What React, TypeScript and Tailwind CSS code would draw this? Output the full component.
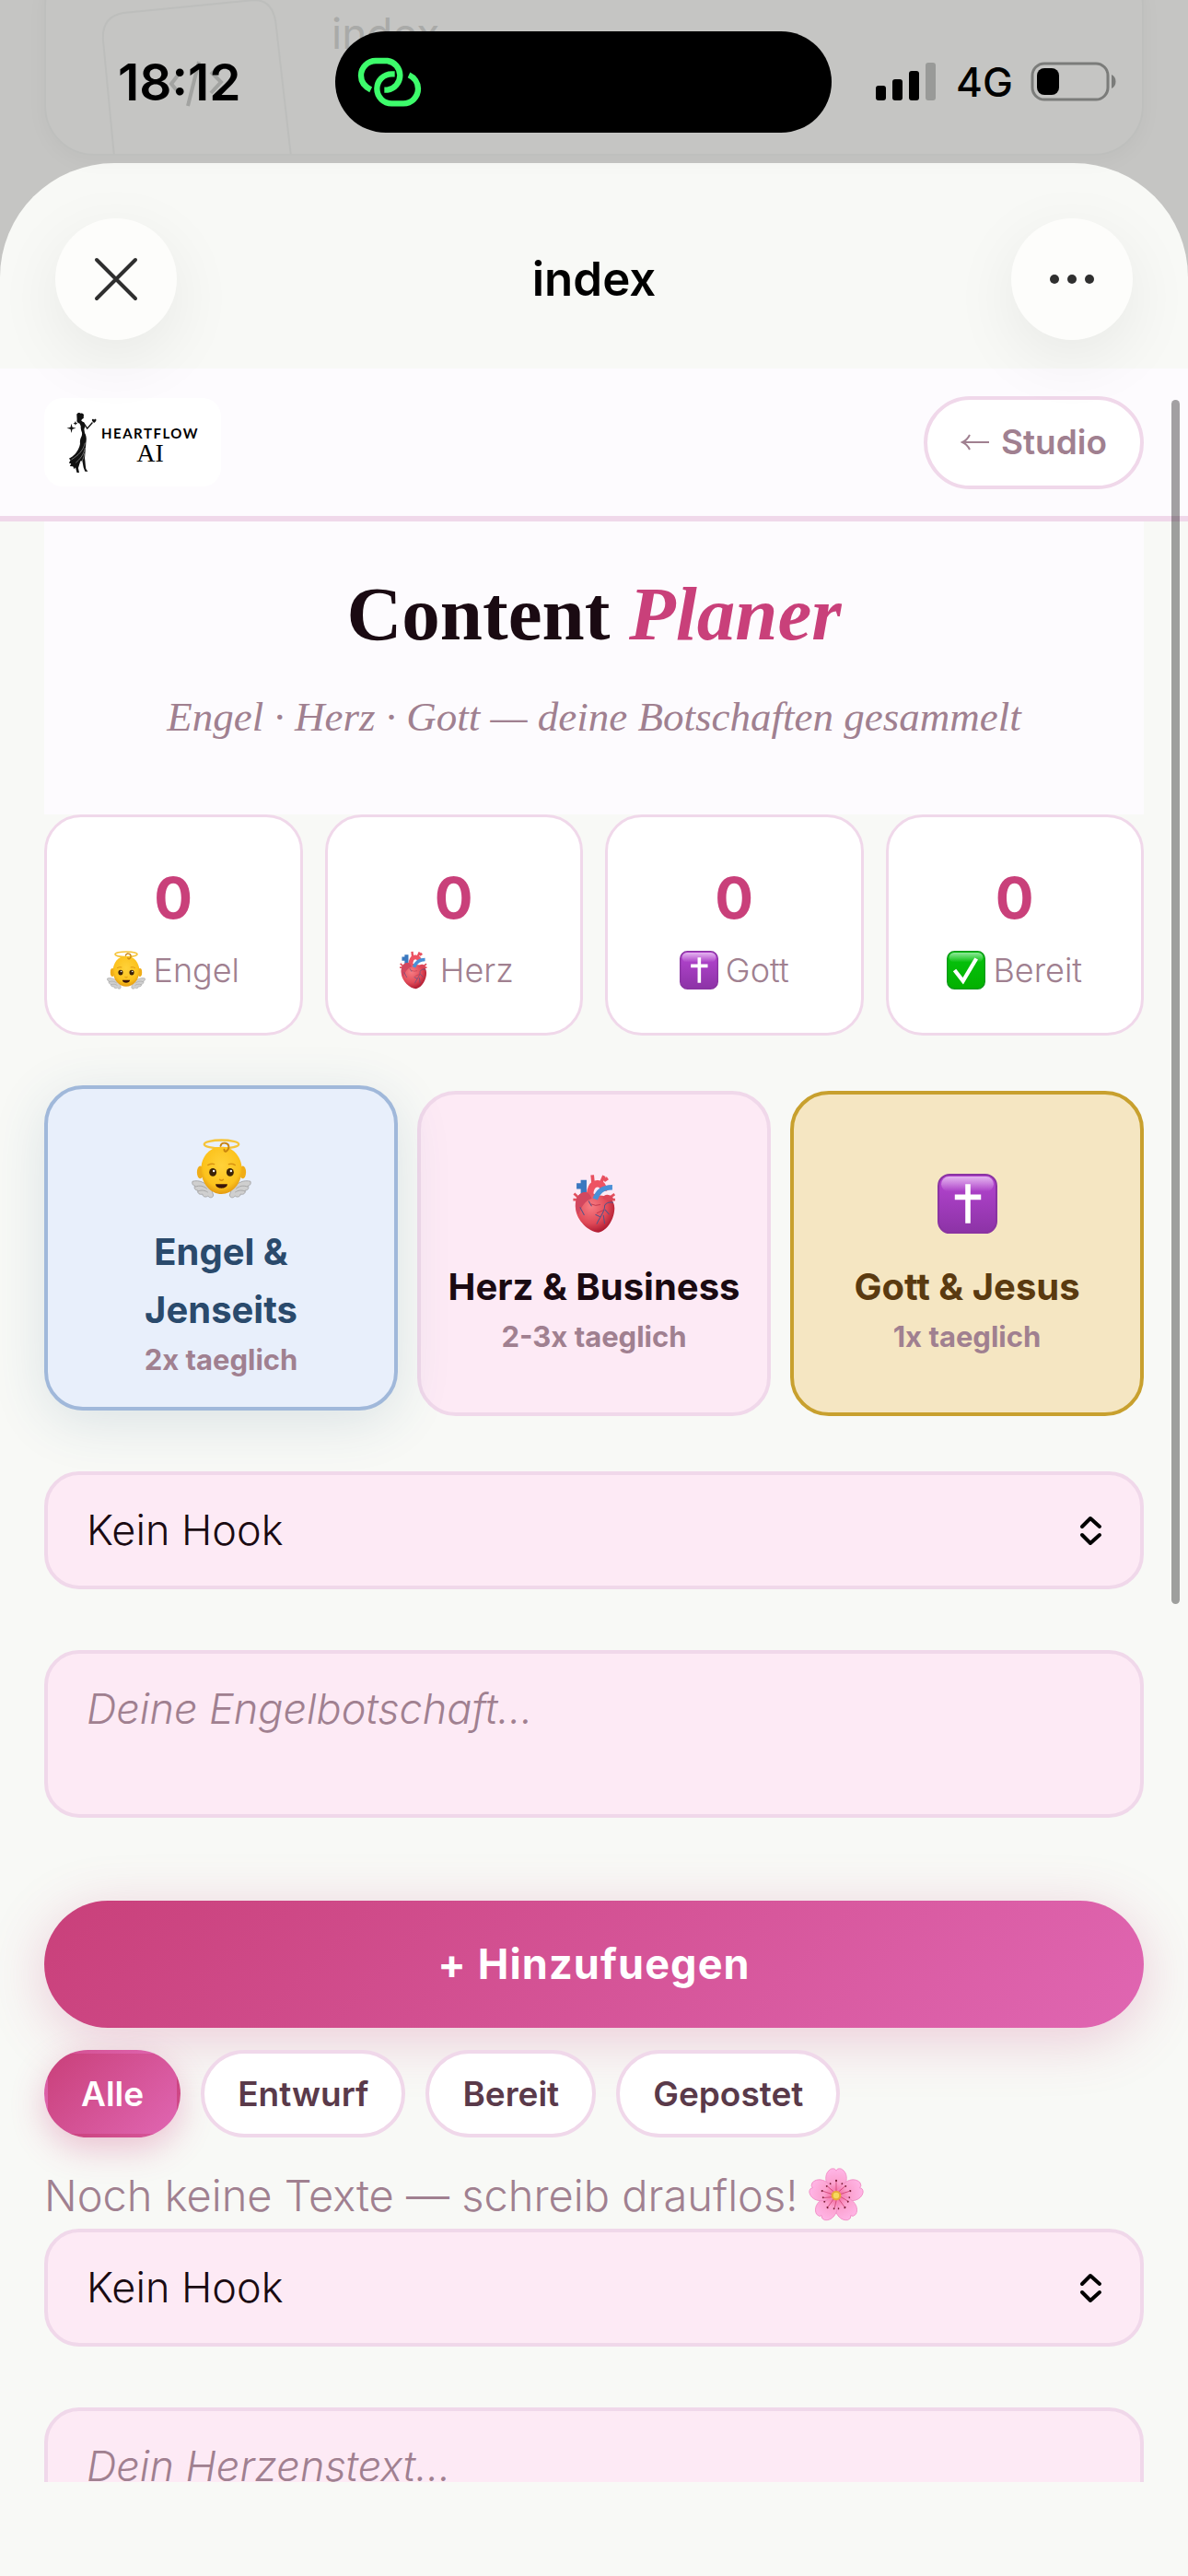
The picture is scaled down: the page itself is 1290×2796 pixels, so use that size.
import { useId, useState } from 'react';
import type { ReactNode } from 'react';

/* ---------- Emoji drawings ---------- */

const AngelIcon = ({ className }: { className: string }) => {
  const id = useId();
  return (
    <svg className={className} viewBox="0 2 66 66" preserveAspectRatio="none" aria-hidden="true">
      <defs>
        <radialGradient id={id} cx="50%" cy="40%" r="60%">
          <stop offset="0%" stopColor="#ffd23a" />
          <stop offset="75%" stopColor="#fcc21c" />
          <stop offset="100%" stopColor="#e39a12" />
        </radialGradient>
      </defs>
      {/* Wings */}
      <g fill="#cfcfcf" stroke="#9d9d9d" strokeWidth="0.8">
        <path d="M22 58C16 50 8 47 1 49c-1 3 1 5 3 5-2 2 0 5 3 5-1 3 2 5 5 4 0 3 4 4 6 2 2 3 6 2 6-1Z" />
        <path d="M44 58c6-8 14-11 21-9 1 3-1 5-3 5 2 2 0 5-3 5 1 3-2 5-5 4 0 3-4 4-6 2-2 3-6 2-6-1Z" />
        <path d="M4 55c5-2 9-1 13 2M7 60c4-2 8-1 11 1M62 55c-5-2-9-1-13 2M59 60c-4-2-8-1-11 1" fill="none" />
      </g>
      {/* Halo */}
      <ellipse cx="33" cy="8" rx="19" ry="4.5" fill="none" stroke="#f6c437" strokeWidth="2.4" />
      {/* Head */}
      <ellipse cx="9.5" cy="39" rx="3.5" ry="7" fill="#f0ad18" />
      <ellipse cx="56.5" cy="39" rx="3.5" ry="7" fill="#f0ad18" />
      <path d="M33 11C19 11 10.5 23 10.5 36 10.5 51 21 63 33 63s22.5-12 22.500-27C55.500 23 47 11 33 11Z" fill={`url(#${id})`} />
      <path d="M32 10c1-5 9-4 9 1 0 4-5 7-5 3" fill="none" stroke="#c9850e" strokeWidth="2" strokeLinecap="round" />
      <ellipse cx="23.5" cy="39" rx="4" ry="4.5" fill="#3b2207" />
      <ellipse cx="42.5" cy="39" rx="4" ry="4.5" fill="#3b2207" />
      <circle cx="24.5" cy="37.5" r="1.2" fill="#fff" />
      <circle cx="43.5" cy="37.5" r="1.2" fill="#fff" />
      <path d="M18 31q4-2 7-1M41 30q4-1 7 1M31 47q2 2 4 0" fill="none" stroke="#d9920f" strokeWidth="1.4" strokeLinecap="round" />
      <path d="M26.500 52h13c0 6-13 6-13 0Z" fill="#3a1509" />
    </svg>
  );
};

const HeartOrganIcon = ({ className }: { className: string }) => {
  const id = useId();
  return (
    <svg className={className} viewBox="64 62 134 194" aria-hidden="true">
      <defs>
        <radialGradient id={id} cx="40%" cy="35%" r="70%">
          <stop offset="0%" stopColor="#f77d83" />
          <stop offset="60%" stopColor="#e04a58" />
          <stop offset="100%" stopColor="#a8142b" />
        </radialGradient>
      </defs>
      {/* Vessels */}
      <path d="M96 145V82M96 102H73" stroke="#3a78bf" strokeWidth="19" fill="none" />
      <path d="M82 142L65 126M82 146H62M180 140l16-12M180 146h18" stroke="#e2515e" strokeWidth="8" fill="none" />
      <path d="M127 96L124 66M152 92l10-23M162 84l12-8" stroke="#e8505f" strokeWidth="11" fill="none" />
      <path d="M118 148C112 112 125 93 142 94c14 1 19 10 19 24" stroke="#ee5363" strokeWidth="22" fill="none" />
      {/* Body */}
      <path d="M100 122c-24 3-34 26-30 55 4 36 42 74 74 75 30-6 52-46 52-79 0-28-22-38-40-40-22-2-36-13-56-11Z" fill={`url(#${id})`} />
      <path d="M98 122c-18 2-28 20-28 42 0 14 4 24 10 30 8-24 20-44 42-52-4-12-12-20-24-20Z" fill="#d2475f" />
      <path d="M133 144c8-20 20-38 56-38" stroke="#4a90d6" strokeWidth="17" fill="none" />
      <path d="M158 142c2-14 20-16 32-4 6 8-10 18-32 4Z" fill="#dc4659" />
      <path d="M192 155c-14-2-24 2-28 10 2 20-16 36-26 60M165 178l14 16M150 202l-16-8M112 150l10 17M84 170l14 26M160 196l4 28" stroke="#545487" strokeWidth="3" fill="none" />
      <path d="M138 190l22-10M120 160q14 8 30 2" stroke="#b72f45" strokeWidth="2.5" fill="none" />
    </svg>
  );
};

const TileIcon = ({ className, light, from, to, edge, children }: {
  className: string;
  light: string;
  from: string;
  to: string;
  edge: string;
  children: ReactNode;
}) => {
  const id = useId();
  return (
    <svg className={className} viewBox="0 0 64 64" aria-hidden="true">
      <defs>
        <linearGradient id={`${id}a`} x1="0" y1="0" x2="0" y2="1">
          <stop offset="0" stopColor={from} />
          <stop offset="1" stopColor={to} />
        </linearGradient>
        <linearGradient id={`${id}b`} x1="0" y1="0" x2="0" y2="1">
          <stop offset="0" stopColor={light} />
          <stop offset="1" stopColor={light} stopOpacity="0" />
        </linearGradient>
      </defs>
      <rect x="1" y="1" width="62" height="62" rx="12" fill={`url(#${id}a)`} stroke={edge} strokeWidth="2" />
      <rect x="4" y="3" width="56" height="16" rx="8" fill={`url(#${id}b)`} />
      {children}
    </svg>
  );
};

const CrossIcon = ({ className }: { className: string }) => (
  <TileIcon className={className} light="#e3b5ee" from="#b645d2" to="#8c33a6" edge="#8a34a2">
    <path d="M32.5 11v42M18.5 25h28" stroke="#fff" strokeWidth="5.5" fill="none" />
  </TileIcon>
);

const CheckIcon = ({ className }: { className: string }) => (
  <TileIcon className={className} light="#8fe89a" from="#06c40e" to="#03b000" edge="#10981c">
    <path d="M13 32l14 18 22-37" stroke="#fff" strokeWidth="6.5" fill="none" />
  </TileIcon>
);

const BlossomIcon = ({ className }: { className: string }) => {
  const id = useId();
  return (
    <svg className={className} viewBox="0 0 56 56" aria-hidden="true">
      <defs>
        <radialGradient id={id} gradientUnits="userSpaceOnUse" cx="28" cy="28" r="27">
          <stop offset="0%" stopColor="#f2588f" />
          <stop offset="45%" stopColor="#fba0cd" />
          <stop offset="100%" stopColor="#ffb5e6" />
        </radialGradient>
      </defs>
      {[0, 72, 144, 216, 288].map((angle) => (
        <g key={angle} transform={`rotate(${angle} 28 28)`}>
          <path d="M28 29C15 18 15 5 23 1q4-1 5 2 1-3 5-2c8 4 8 17-5 28Z" fill={`url(#${id})`} stroke="#f08fc5" strokeWidth="0.8" />
          <path d="M28 25V14M25 24l-3-7M31 24l3-7" stroke="#d34a7c" strokeWidth="0.8" />
          <circle cx="28" cy="13" r="1" fill="#7a1b33" />
          <circle cx="22" cy="16" r="0.9" fill="#7a1b33" />
          <circle cx="34" cy="16" r="0.9" fill="#7a1b33" />
        </g>
      ))}
      <circle cx="28" cy="28" r="5" fill="#e8a93a" />
      <circle cx="28" cy="28" r="3" fill="#f6d95c" />
    </svg>
  );
};

/* ---------- Phone chrome ---------- */

const StatusBar = () => (
  <header className="relative h-[177px] shrink-0">
    {/* Dimmed page behind the sheet */}
    <div className="absolute inset-x-12 -top-12 bottom-2 overflow-hidden rounded-[54px] border-2 border-[#bebfbd] shadow-[0_6px_24px_rgba(0,0,0,0.03)]">
      <svg className="absolute left-[58px] top-[46px] h-[170px] w-[220px]" viewBox="0 0 220 170" fill="none" aria-hidden="true">
        <path d="M16 170L4 44Q2 18 26 14L168 0q22 0 24 30l16 140" stroke="#bdbebc" strokeWidth="2" />
        <path d="M88 78L78 91l10 12M108 67l-12 48M121 78l11 11-11 12" stroke="#a2a3a1" strokeWidth="4" />
      </svg>
      <span className="absolute left-[310px] top-[54px] text-[46px] leading-[56px] text-[#a9aaa8]">index</span>
    </div>
    <div className="relative flex h-full items-center text-black">
      <div className="w-[364px] pl-[128px] text-[55px] leading-[64px] font-semibold">18:12</div>
      <div className="flex h-[110px] flex-1 items-center rounded-full bg-black pl-6">
        <svg className="h-[54px] w-[70px]" viewBox="54 64 210 162" fill="none" stroke="#3dfc6b" strokeWidth="19" aria-hidden="true">
          <path d="M98 170C78 160 66 143 66 124A48 48 0 0 1 114 76H152A48 48 0 0 1 152 171H142" />
          <path d="M176 119H166A48 48 0 0 0 166 215H204A48 48 0 0 0 252 167C252 148 240 130 222 122" />
        </svg>
      </div>
      <div className="flex w-[387px] items-center gap-[22px] pl-12">
        <svg className="h-[41px] w-[65px]" viewBox="0 0 65 41" aria-hidden="true">
          <rect x="0" y="25" width="11" height="16" rx="3" />
          <rect x="18" y="18" width="11" height="23" rx="3" />
          <rect x="36" y="9" width="11" height="32" rx="3" />
          <rect x="54" y="0" width="11" height="41" rx="3" fill="#999a98" />
        </svg>
        <span className="w-[59px] text-[44px] leading-[56px] font-medium">4G</span>
        <svg className="h-[43px] w-[94px]" viewBox="0 0 94 43" aria-hidden="true">
          <rect x="2" y="2" width="82" height="39" rx="13" fill="none" stroke="#7b7c7a" strokeWidth="3" />
          <rect x="7" y="7" width="24" height="29" rx="8" />
          <path d="M88 14c6 2 6 13 0 15Z" fill="#7b7c7a" />
        </svg>
      </div>
    </div>
  </header>
);

const SheetHeader = () => (
  <div className="relative z-10 flex h-[223px] shrink-0 items-center justify-between px-15 pt-[29px]">
    <button
      type="button"
      aria-label="Schließen"
      className="flex size-[132px] items-center justify-center rounded-full bg-[#fdfdfb] shadow-[0_20px_72px_rgba(0,0,0,0.07)]"
    >
      <svg className="size-[48px]" viewBox="0 0 48 48" stroke="#2f2f2f" strokeWidth="4" strokeLinecap="round" aria-hidden="true">
        <path d="M3 3l42 42M45 3L3 45" />
      </svg>
    </button>
    <h2 className="text-[51px] leading-[64px] font-semibold text-black">index</h2>
    <button
      type="button"
      aria-label="Mehr"
      className="flex size-[132px] items-center justify-center rounded-full bg-[#fdfdfb] shadow-[0_20px_72px_rgba(0,0,0,0.07)]"
    >
      <svg className="h-[12px] w-[50px]" viewBox="0 0 50 12" fill="#2f2f2f" aria-hidden="true">
        <circle cx="6" cy="6" r="5" />
        <circle cx="25" cy="6" r="5" />
        <circle cx="44" cy="6" r="5" />
      </svg>
    </button>
  </div>
);

/* ---------- Page ---------- */

const Logo = () => (
  <div className="flex h-24 w-48 items-center gap-1 rounded-[20px] bg-white pl-6">
    <svg className="h-[66px] w-[34px] shrink-0" viewBox="98 80 100 196" fill="#111" aria-hidden="true">
      <path d="M131 88c2-5 10-6 13-3 8-2 12 5 9 10 2 4-1 8-5 8l-2 6 8 5 4 14-3 8 2 12c6 10 6 20 4 32l-4 50c2 12 2 24 4 34l6 8h-9l-5-12-4-22-6 1-7 22 4 20h-7l-6-22-4 6-4-9-10-1 4-8-7-2 5-9-5-5 10-6c12-10 22-22 26-42-2-20 8-22 6-36-4-10-4-16-4-22l-4-8c-6 0-10-5-8-12Z" />
      <path d="M152 114l13 20 17-20" fill="none" stroke="#111" strokeWidth="4" />
      <path d="M187 116c-8-7-8-12-4-13 2 0 4 2 4 4 0-3 4-5 6-3 3 2 0 8-6 12Z" />
      <path d="M114 118l3 12 12 3-12 3-3 12-3-12-12-3 12-3ZM127 110l2 5 5 2-5 2-2 5-2-5-5-2 5-2Z" />
      <path d="M158 180c-6 26-22 40-44 54M158 196c-4 22-16 36-30 48M156 214c-2 16-8 26-14 34" fill="none" stroke="#ccc" strokeWidth="1.5" />
    </svg>
    <div className="flex flex-col items-center pt-[8px] text-black">
      <span className="font-[Lato] text-[15px] leading-[16px] font-bold tracking-widest">HEARTFLOW</span>
      <span className="font-['Liberation_Serif'] text-[28px] leading-[28px]">AI</span>
    </div>
  </div>
);

const PageNav = () => (
  <nav className="flex h-[166px] items-center justify-between border-b-6 border-[#f0d8ea] bg-[#fdfbfe] px-12">
    <Logo />
    <a href="#studio" className="flex h-[101px] items-center gap-3 rounded-full border-4 border-[#f0d8ea] bg-white px-9 text-[37px] leading-[48px] font-semibold text-[#a08090]">
      <svg className="h-[18px] w-[32px]" viewBox="0 0 32 18" fill="none" stroke="#a08090" strokeWidth="2" aria-hidden="true">
        <path d="M31 9H2M10 1Q7 7 2 9q5 2 8 8" />
      </svg>
      Studio
    </a>
  </nav>
);

const stats = [
  { label: 'Engel', Icon: AngelIcon },
  { label: 'Herz', Icon: HeartOrganIcon },
  { label: 'Gott', Icon: CrossIcon },
  { label: 'Bereit', Icon: CheckIcon },
];

const categories = [
  {
    title: 'Engel & Jenseits',
    rhythm: '2x taeglich',
    Icon: AngelIcon,
    card: 'border-[#a0b8da] bg-[#e8effb] text-[#2a4a6c] px-16 -translate-y-1.5 shadow-[0_12px_60px_rgba(42,90,130,0.14)]',
  },
  {
    title: 'Herz & Business',
    rhythm: '2-3x taeglich',
    Icon: HeartOrganIcon,
    card: 'border-[#f0d8ea] bg-[#fdeaf5] text-[#1a0a12] px-4',
  },
  {
    title: 'Gott & Jesus',
    rhythm: '1x taeglich',
    Icon: CrossIcon,
    card: 'border-[#c8a02e] bg-[#f5e6c2] text-[#5a3a10] px-4',
  },
];

const filters = ['Alle', 'Entwurf', 'Bereit', 'Gepostet'];

const HookSelect = ({ label }: { label: string }) => (
  <div className="relative">
    <select
      aria-label={label}
      className="block h-32 w-full appearance-none rounded-[38px] border-4 border-[#f0d8ea] bg-[#fdeaf5] px-[42px] text-[45px] leading-[56px] font-light text-[#1a0a12]"
    >
      <option>Kein Hook</option>
    </select>
    <svg
      className="pointer-events-none absolute right-[45px] top-12 h-[33px] w-[25px]"
      viewBox="0 0 25 33"
      fill="none"
      stroke="#000"
      strokeWidth="4"
      strokeLinecap="round"
      strokeLinejoin="round"
      aria-hidden="true"
    >
      <path d="M3 12l9-9 10 9M3 21l9 9 10-9" />
    </svg>
  </div>
);

const MessageBox = ({ placeholder }: { placeholder: string }) => (
  <textarea
    aria-label={placeholder}
    placeholder={placeholder}
    className="mt-[66px] block h-[182px] w-full resize-none rounded-[38px] border-4 border-[#f0d8ea] bg-[#fdeaf5] px-[42px] py-[28px] text-[45px] leading-[64px] font-light text-[#1a0a12] placeholder:text-[#a08090] placeholder:italic"
  />
);

const App = () => {
  const [filter, setFilter] = useState('Alle');

  return (
    <div className="flex h-screen flex-col overflow-hidden bg-[#c5c5c3] font-['Inter',sans-serif]">
      <StatusBar />
      <div className="flex min-h-0 flex-1 flex-col rounded-t-[124px] bg-[#f8f9f6]">
        <SheetHeader />
        <main className="relative min-h-0 flex-1 overflow-hidden">
          <PageNav />
          <div className="px-12">
            {/* Hero */}
            <section className="bg-[#fdfbfe] pt-[44px] pb-[70px] text-center font-['Liberation_Serif',serif]">
              <h1 className="text-[83px] leading-[112px] font-bold text-[#1a0a12]">
                Content <em className="text-[#c9407a]">Planer</em>
              </h1>
              <p className="mt-[20px] text-[45px] leading-[72px] text-[#a08090] italic">
                Engel · Herz · Gott — deine Botschaften gesammelt
              </p>
            </section>

            {/* Stats */}
            <section className="grid grid-cols-4 gap-6">
              {stats.map(({ label, Icon }) => (
                <div key={label} className="flex h-60 flex-col items-center justify-center rounded-[40px] border-3 border-[#f0d8ea] bg-white">
                  <div className="text-[62px] leading-[96px] font-bold text-[#c9407a]">0</div>
                  <div className="flex items-center gap-2 pt-[2px] text-[36px] leading-[56px] font-light text-[#a08090]">
                    <Icon className="size-[42px]" />
                    {label}
                  </div>
                </div>
              ))}
            </section>

            {/* Categories */}
            <section className="mt-15 grid grid-cols-3 gap-[21px]">
              {categories.map(({ title, rhythm, Icon, card }) => (
                <button
                  key={title}
                  type="button"
                  className={`flex h-[353px] flex-col items-center justify-center rounded-[42px] border-4 ${card}`}
                >
                  <span className="flex h-[117px] items-center">
                    <Icon className="size-[65px]" />
                  </span>
                  <span className="text-[40px] leading-[63px] font-bold">{title}</span>
                  <span className="text-[31px] leading-[46px] font-bold text-[#a08090]">{rhythm}</span>
                </button>
              ))}
            </section>

            {/* Angel form */}
            <section className="mt-15">
              <HookSelect label="Engel Hook" />
              <MessageBox placeholder="Deine Engelbotschaft..." />
              <button
                type="button"
                className="mt-[90px] block h-[138px] w-full rounded-full bg-[linear-gradient(135deg,#c9407a,#e066b2)] text-[45px] leading-[56px] font-bold tracking-wide text-white shadow-[0_12px_60px_rgba(201,64,122,0.25)]"
              >
                + Hinzufuegen
              </button>
            </section>

            {/* Filters */}
            <div className="relative mt-6 flex gap-[22px]">
              {filters.map((name) => (
                <button
                  key={name}
                  type="button"
                  onClick={() => setFilter(name)}
                  className={`h-[95px] rounded-full border-4 px-9 text-[37px] leading-[48px] font-semibold ${
                    filter === name
                      ? 'border-transparent bg-[linear-gradient(135deg,#c9407a,#e066b2)] text-white shadow-[0_12px_36px_rgba(201,64,122,0.3)]'
                      : 'border-[#f0d8ea] bg-white text-[#5a3a4a]'
                  }`}
                >
                  {name}
                </button>
              ))}
            </div>

            <p className="mt-[27px] flex h-[72px] items-center gap-3 text-[47px] leading-[72px] font-light text-[#a08090]">
              Noch keine Texte — schreib drauflos!
              <BlossomIcon className="size-[60px]" />
            </p>

            {/* Heart form */}
            <section>
              <HookSelect label="Herz Hook" />
              <MessageBox placeholder="Dein Herzenstext..." />
            </section>
          </div>

          {/* Scroll thumb */}
          <div className="absolute top-[34px] right-[9px] h-[1307px] w-[9px] rounded-full bg-black/36" />
        </main>
        <footer className="h-[102px] shrink-0" />
      </div>
    </div>
  );
};

export default App;
